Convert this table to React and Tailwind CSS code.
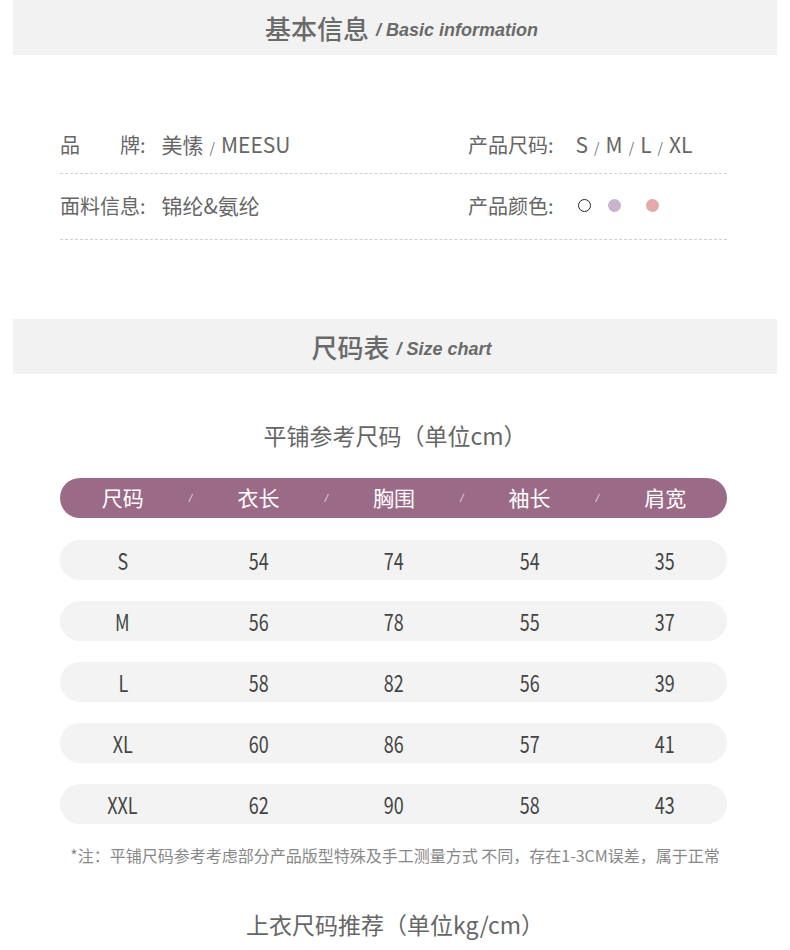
import React from 'react';

const CJK = "font-['Noto_Sans_CJK_SC',sans-serif]";

const sizes = [
    ['S', '54', '74', '54', '35'],
    ['M', '56', '78', '55', '37'],
    ['L', '58', '82', '56', '39'],
    ['XL', '60', '86', '57', '41'],
    ['XXL', '62', '90', '58', '43'],
];

const heads = ['尺码', '衣长', '胸围', '袖长', '肩宽'];

function Band({ cn, en, className }) {
    return (
        <div className={`mx-[13px] h-[55px] pl-[13px] bg-[#f2f2f2] flex items-center justify-center gap-[7px] ${className}`}>
            <span className={`${CJK} text-[26px] font-medium text-[#6a6a6a] leading-none`}>{cn}</span>
            <span className="font-['Liberation_Sans',sans-serif] italic font-bold text-[18px] text-[#6a6a6a] leading-none mt-[4px]">{en}</span>
        </div>
    );
}

function Slash() {
    return <span className="text-[14px] text-[#777] mx-[6px]">/</span>;
}

function Cells({ cells, header }) {
    const out = [];
    cells.forEach((c, i) => {
        if (i > 0) {
            out.push(
                <div key={'s' + i} className="w-0 flex justify-center">
                    {header && <span className="text-[11px] italic text-[#ead6e2] font-['Liberation_Sans',sans-serif]">/</span>}
                </div>
            );
        }
        out.push(
            <div key={'c' + i} className="flex justify-center">
                {header
                    ? <span className={`${CJK} text-[21px] text-white`}>{c}</span>
                    : <span className={`${CJK} inline-block text-[23px] text-[#444] scale-x-[0.78]`}>{c}</span>}
            </div>
        );
    });
    return (
        <div className="-ml-[5px] w-[678px] h-full grid grid-cols-[1fr_0px_1fr_0px_1fr_0px_1fr_0px_1fr] items-center">
            {out}
        </div>
    );
}

export default function App() {
    return (
        <div className={`w-[790px] h-[950px] bg-white overflow-hidden ${CJK}`}>
            <Band cn="基本信息" en="/ Basic information" className="h-[54px]" />

            {/* basic info */}
            <div className="mx-[60px] w-[667px] text-[20px] text-[#666] leading-[24px]">
                <div className="mt-[77px] pb-[14px] border-b border-dashed border-[#cfcfcf] flex">
                    <div className="w-[408px]">品　　牌:<span className="ml-[16px] text-[21px]">美愫<Slash />MEESU</span></div>
                    <div>产品尺码:<span className="ml-[22px] text-[21px]">S<Slash />M<Slash />L<Slash />XL</span></div>
                </div>
                <div className="pt-[19px] pb-[21px] border-b border-dashed border-[#cfcfcf] flex">
                    <div className="w-[408px]">面料信息:<span className="ml-[16px] text-[21px]">锦纶&amp;氨纶</span></div>
                    <div className="flex items-center">
                        产品颜色:
                        <span className="ml-[24px] w-[13px] h-[13px] rounded-full border-[1.5px] border-[#222]"></span>
                        <span className="ml-[17px] w-[13px] h-[13px] rounded-full bg-[#c8b5cd]"></span>
                        <span className="ml-[25px] w-[13px] h-[13px] rounded-full bg-[#e2aba7]"></span>
                    </div>
                </div>
            </div>

            <Band cn="尺码表" en="/ Size chart" className="mt-[79px]" />

            <div className="mt-[46px] text-center text-[23px] leading-[30px] text-[#666]">平铺参考尺码（单位cm）</div>

            <div className="mt-[28px] mx-[60px] w-[667px]">
                <div className="h-[40px] rounded-full bg-[#9b6a87]">
                    <Cells cells={heads} header />
                </div>
                <div className="mt-[22px] flex flex-col gap-[21px]">
                    {sizes.map((r) => (
                        <div key={r[0]} className="h-[40px] rounded-full bg-[#f3f3f3]">
                            <Cells cells={r} />
                        </div>
                    ))}
                </div>
            </div>

            <div className="mt-[21px] text-center text-[16px] leading-[20px] text-[#888]">
                *注：平铺尺码参考考虑部分产品版型特殊及手工测量方式 不同，存在1-3CM误差，属于正常
            </div>

            <div className="mt-[43px] text-center text-[23px] leading-[32px] text-[#666]">上衣尺码推荐（单位kg/cm）</div>
        </div>
    );
}
